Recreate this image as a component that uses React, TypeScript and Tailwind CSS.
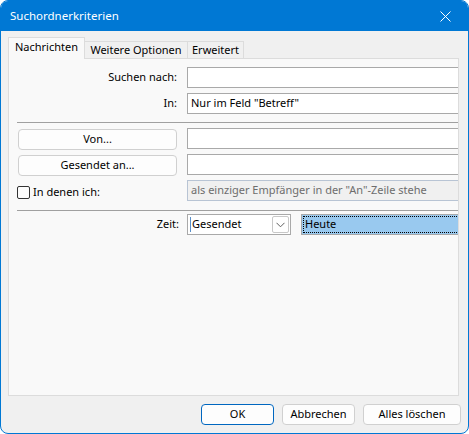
import React from 'react';

const font = { fontFamily: '"Noto Sans", "Open Sans", sans-serif' };

function Field({ children, className = '' }: { children?: React.ReactNode; className?: string }) {
  return (
    <div className={`shrink-0 h-[21px] w-[300px] border border-[#a9a9a9] bg-white flex items-center pl-[3px] whitespace-nowrap ${className}`}>
      {children}
    </div>
  );
}

function PushButton({ label, className = '' }: { label: string; className?: string }) {
  return (
    <button className={`shrink-0 h-[21px] rounded-[4px] border border-[#d0d0d0] bg-[#fdfdfd] text-black flex items-center justify-center ${className}`}>
      {label}
    </button>
  );
}

export default function App() {
  return (
    <div style={font} className="w-[469px] h-[434px] rounded-[8px] border border-[#0078d4] bg-[#f0f0f0] overflow-hidden flex flex-col text-[11px] text-black">
      {/* Titelleiste */}
      <div className="h-[30px] bg-[#0078d4] flex items-center justify-between pl-[9px] pr-[15px] text-white text-[11.5px]">
        <span>Suchordnerkriterien</span>
        <svg width="11" height="11" viewBox="0 0 11 11" className="mr-[2px]">
          <path d="M0.5 0.5 L10.5 10.5 M10.5 0.5 L0.5 10.5" stroke="white" strokeWidth="1" />
        </svg>
      </div>

      <div className="flex-1 flex flex-col pl-[7px] pr-[9px]">
        {/* Registerkarten */}
        <div className="mt-[6px] h-[21px] flex items-end">
          <div className="relative z-10 h-[22px] -mb-px w-[77px] border border-b-0 border-[#dcdcdc] bg-[#f9f9f9] flex items-center justify-center pb-[2px]">
            Nachrichten
          </div>
          <div className="h-[17px] w-[103px] border border-l-0 border-b-0 border-[#dcdcdc] bg-[#f0f0f0] flex items-center justify-center">
            Weitere Optionen
          </div>
          <div className="h-[17px] w-[56px] border border-l-0 border-b-0 border-[#dcdcdc] bg-[#f0f0f0] flex items-center justify-center">
            Erweitert
          </div>
        </div>

        {/* Inhalt */}
        <div className="h-[338px] border border-[#dcdcdc] bg-[#f9f9f9] overflow-hidden flex flex-col pt-[8px]">
          <div className="flex items-center h-[21px]">
            <div className="shrink-0 w-[168px] text-right">Suchen nach:</div>
            <Field className="ml-[10px]" />
          </div>
          <div className="flex items-center h-[21px] mt-[5px]">
            <div className="shrink-0 w-[168px] text-right">In:</div>
            <Field className="ml-[10px]">Nur im Feld "Betreff"</Field>
          </div>

          <div className="ml-[8px] mt-[8px] h-px bg-[#a0a0a0]" />

          <div className="flex items-start h-[21px] mt-[5px]">
            <PushButton label="Von..." className="ml-[9px] mt-px w-[159px]" />
            <Field className="ml-[10px]" />
          </div>
          <div className="flex items-start h-[21px] mt-[5px]">
            <PushButton label="Gesendet an..." className="ml-[9px] mt-px w-[159px]" />
            <Field className="ml-[10px]" />
          </div>
          <div className="flex items-center h-[21px] mt-[5px]">
            <div className="shrink-0 w-[168px] flex items-center pl-[8px] pt-[3px]">
              <span className="shrink-0 w-[13px] h-[13px] rounded-[2px] border border-[#333] bg-[#fcfcfc]" />
              <span className="ml-[3px]">In denen ich:</span>
            </div>
            <Field className="ml-[10px] !bg-[#f0f0f0] !border-[#b8c4d4] text-[#6d6d6d]">
              als einziger Empfänger in der "An"-Zeile stehe
            </Field>
          </div>

          <div className="ml-[8px] mt-[9px] h-px bg-[#a0a0a0]" />

          <div className="flex items-center h-[21px] mt-[3px]">
            <div className="shrink-0 w-[170px] text-right">Zeit:</div>
            <div className="shrink-0 ml-[8px] h-[21px] w-[104px] border border-[#a9a9a9] bg-white flex items-center justify-between pl-[2px] pr-px">
              <div className="flex items-center h-full">
                <span className="w-px h-[15px] bg-[#5a8fc8]" />
                <span className="ml-[1px]">Gesendet</span>
              </div>
              <div className="w-[17px] h-[17px] border border-[#c8c8c8] rounded-[2px] flex items-center justify-center">
                <svg width="9" height="6" viewBox="0 0 9 6">
                  <path d="M0.5 0.8 L4.5 4.8 L8.5 0.8" fill="none" stroke="#606060" strokeWidth="1" />
                </svg>
              </div>
            </div>
            <div className="shrink-0 ml-[10px] h-[21px] w-[200px] border border-[#a9a9a9] bg-[#99c9ef] p-px">
              <div className="h-full border border-dotted border-black flex items-center pl-[1px]">Heute</div>
            </div>
          </div>
        </div>

        {/* Schaltflächen */}
        <div className="mt-[8px] -mr-[2px] flex justify-end gap-[8px]">
          <button className="h-[21px] w-[73px] rounded-[4px] border border-[#0067c0] bg-[#fdfdfd] flex items-center justify-center">OK</button>
          <PushButton label="Abbrechen" className="w-[73px]" />
          <PushButton label="Alles löschen" className="w-[98px]" />
        </div>
      </div>
    </div>
  );
}
